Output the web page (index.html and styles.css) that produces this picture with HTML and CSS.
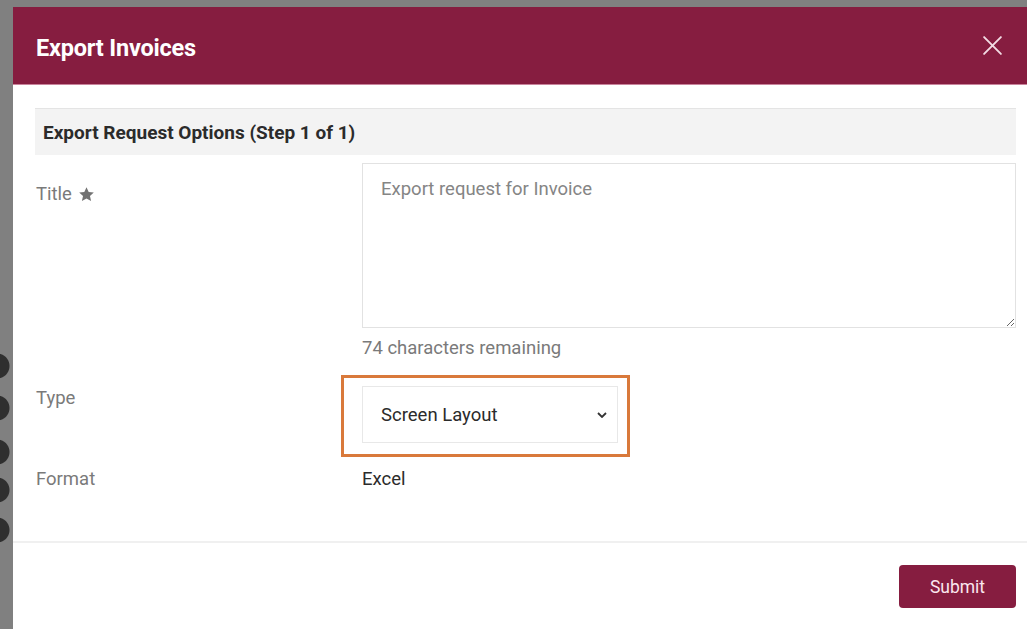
FILE: index.html
```html
<!DOCTYPE html>
<html lang="en">
<head>
<meta charset="utf-8">
<title>Export Invoices</title>
<link rel="stylesheet" href="styles.css">
</head>
<body>
  <div class="backdrop">
    <section class="dialog" role="dialog" aria-labelledby="dlg-title">
      <header class="dialog-header">
        <h1 id="dlg-title" class="dialog-title">Export Invoices</h1>
        <button class="close-btn" aria-label="Close">
          <svg viewBox="0 0 20 20" width="21" height="21" aria-hidden="true">
            <path d="M2 2 L18 18 M18 2 L2 18" stroke="currentColor" stroke-width="1.8" stroke-linecap="round" fill="none"/>
          </svg>
        </button>
      </header>

      <div class="dialog-body">
        <div class="section-bar">Export Request Options (Step 1 of 1)</div>

        <div class="form">
          <div class="form-row">
            <label class="form-label" for="title-field">Title
              <svg class="req-star" viewBox="0 0 24 24" width="17" height="17" aria-hidden="true">
                <path d="M12 1.8l3.1 6.6 7.2.8-5.4 4.9 1.6 7.1L12 17.6 5.5 21.2l1.6-7.1L1.7 9.2l7.2-.8z" fill="currentColor"/>
              </svg>
            </label>
            <div class="form-field">
              <textarea id="title-field" class="text-area" placeholder="Export request for Invoice"></textarea>
              <div class="hint">74 characters remaining</div>
            </div>
          </div>

          <div class="form-row row-type">
            <div class="form-label">Type</div>
            <div class="form-field">
              <div class="highlight">
                <div class="select">
                  <span>Screen Layout</span>
                  <svg class="chevron" viewBox="0 0 10 6" width="10" height="6" aria-hidden="true">
                    <path d="M1 1 L5 5 L9 1" stroke="currentColor" stroke-width="1.8" fill="none"/>
                  </svg>
                </div>
              </div>
            </div>
          </div>

          <div class="form-row row-format">
            <div class="form-label">Format</div>
            <div class="form-field value">Excel</div>
          </div>
        </div>
      </div>

      <footer class="dialog-footer">
        <button class="btn-primary">Submit</button>
      </footer>
    </section>
  </div>
</body>
</html>
```

FILE: styles.css
```css
html, body {
  margin: 0;
  height: 100%;
  overflow: hidden;
}

body {
  font-family: Roboto, "Liberation Sans", Arial, sans-serif;
  background-color: #808080;
  background-image:
    radial-gradient(circle at -3px 366px, #2f2f2f 0 12px, transparent 13px),
    radial-gradient(circle at -3px 408px, #2f2f2f 0 12px, transparent 13px),
    radial-gradient(circle at -3px 452px, #2f2f2f 0 12px, transparent 13px),
    radial-gradient(circle at -3px 490px, #2f2f2f 0 12px, transparent 13px),
    radial-gradient(circle at -3px 530px, #2f2f2f 0 12px, transparent 13px);
  background-repeat: no-repeat;
}

.backdrop {
  padding: 7px 0 0 13px;
}

.dialog {
  width: 1026px;
  background: #fff;
  display: flex;
  flex-direction: column;
}

.dialog-header {
  height: 78px;
  box-sizing: border-box;
  background: #861d40;
  border-bottom: 1px solid #c9849c;
  display: flex;
  align-items: center;
  justify-content: space-between;
  padding: 0 26px 0 23px;
}

.dialog-title {
  margin: 0;
  color: #fff;
  font-size: 23.5px;
  font-weight: 700;
  letter-spacing: -0.2px;
  padding-top: 4px;
}

.close-btn {
  background: none;
  border: 0;
  padding: 0;
  margin-right: 10px;
  color: #f2dbe3;
  display: flex;
  width: 21px;
  height: 21px;
}

.dialog-body {
  padding: 23px 23px 0 22px;
}

.section-bar {
  background: #f3f3f3;
  border-top: 1px solid #e4e4e4;
  height: 47px;
  box-sizing: border-box;
  display: flex;
  align-items: center;
  padding-left: 8px;
  font-size: 19px;
  font-weight: 700;
  letter-spacing: 0;
  color: #2b2b2b;
}

.form {
  padding-top: 8px;
  padding-bottom: 51px;
}

.form-row {
  display: grid;
  grid-template-columns: 327px 1fr;
}

.form-label {
  font-size: 18.5px;
  color: #7a7a7a;
  padding-left: 1px;
  display: flex;
  align-items: flex-start;
  gap: 6px;
}

.form-row:first-child .form-label {
  padding-top: 20px;
}

.row-type .form-label { padding-top: 12px; }

.req-star {
  color: #737373;
  margin-top: 3px;
}

.text-area {
  display: block;
  box-sizing: border-box;
  width: 654px;
  height: 165px;
  border: 1px solid #e2e2e2;
  border-radius: 0;
  padding: 14px 18px;
  font-family: inherit;
  font-size: 18.5px;
  color: #333;
  resize: vertical;
  outline: none;
}

.text-area::placeholder {
  color: #858585;
}

.hint {
  font-size: 18.5px;
  color: #7a7a7a;
  margin-top: 9px;
  line-height: 22px;
}

.row-type {
  margin-top: 16px;
}

.highlight {
  margin-left: -21px;
  width: 289px;
  height: 82px;
  box-sizing: border-box;
  border: 3px solid #d9793b;
  padding: 8px 0 0 18px;
}

.select {
  width: 256px;
  height: 57px;
  box-sizing: border-box;
  border: 1px solid #e8e8e8;
  display: flex;
  align-items: center;
  justify-content: space-between;
  padding: 0 10px 0 18px;
  font-size: 18.5px;
  color: #2b2b2b;
}

.chevron {
  color: #333;
}

.row-format {
  margin-top: 11px;
}

.value {
  font-size: 18.5px;
  color: #2b2b2b;
}

.dialog-footer {
  border-top: 2px solid #f0f0f0;
  display: flex;
  justify-content: flex-end;
  padding: 22px 23px 40px;
}

.btn-primary {
  width: 117px;
  height: 43px;
  background: #861d40;
  color: #fbe6ee;
  border: 0;
  border-radius: 4px;
  font-family: inherit;
  font-size: 17.5px;
}
```
